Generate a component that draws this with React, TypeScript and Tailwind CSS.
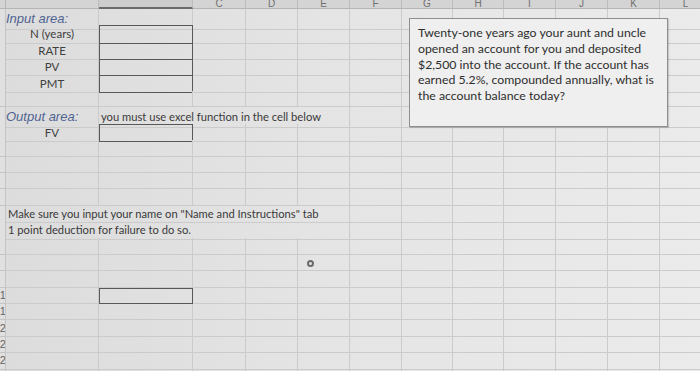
import React from 'react';

// Column template: row header, A, B, C ... L
const COLS = 'grid grid-cols-[6px_93px_94px_53px_52px_52px_52px_51px_51px_52px_52px_52px_52px]';
const LETTERS = ['A', 'B', 'C', 'D', 'E', 'F', 'G', 'H', 'I', 'J', 'K', 'L'];

type Cell = {
  span?: string;
  box?: 'top' | 'mid' | 'single';
  content?: React.ReactNode;
  className?: string;
};

const blue = "italic text-[#4f6391] text-[13px] font-['Liberation_Sans',Arial,sans-serif]";
const center = 'justify-center text-[11.5px] text-[#404040]';
const note = 'text-[11.2px] text-[#3a3a3a] pl-[2px] whitespace-nowrap';

// Only the cells that hold something; the rest are filled in as empty grid cells
const ROWS: Record<number, Cell[]> = {
  1: [{ content: 'Input area:', className: blue }],
  2: [{ content: 'N (years)', className: center }, { box: 'top' }],
  3: [{ content: 'RATE', className: center }, { box: 'mid' }],
  4: [{ content: 'PV', className: center }, { box: 'mid' }],
  5: [{ content: 'PMT', className: center }, { box: 'mid' }],
  7: [
    { content: 'Output area:', className: blue },
    { span: 'col-span-4', content: 'you must use excel function in the cell below', className: note },
  ],
  8: [{ content: 'FV', className: center }, { box: 'single' }],
  13: [{ span: 'col-span-5', content: 'Make sure you input your name on "Name and Instructions" tab', className: note }],
  14: [{ span: 'col-span-5', content: '1 point deduction for failure to do so.', className: note }],
  16: [
    {},
    {},
    {},
    {},
    { content: <span className="block w-[7px] h-[7px] rounded-full border-2 border-[#6b6b6b] ml-[9px] mt-[1px]" /> },
  ],
  18: [{}, { box: 'single' }],
};

const spanCount = (c: Cell) => (c.span ? Number(c.span.split('-')[2]) : 1);

function Row({ n }: { n: number }) {
  const defined = ROWS[n] ?? [];
  const used = defined.reduce((s, c) => s + spanCount(c), 0);
  const cells: Cell[] = [...defined, ...Array.from({ length: 12 - used }, () => ({}))];

  return (
    <div className={`${COLS} h-[16.4px]`}>
      {/* row header, almost entirely outside the photo */}
      <div className="bg-[#e0e0e0] border-r border-b border-[#c4c4c4] overflow-hidden flex items-center justify-end">
        {n >= 18 && (
          <span className="text-[11px] leading-none text-[#666] translate-x-[7px] font-['Liberation_Sans',sans-serif]">
            {n}
          </span>
        )}
      </div>
      {cells.map((c, i) => {
        const boxCls =
          c.box === 'top' || c.box === 'single'
            ? 'border-r border-b border-r-[#585858] border-b-[#585858] shadow-[inset_1px_1px_0_#585858]'
            : c.box === 'mid'
            ? 'border-r border-b border-r-[#585858] border-b-[#585858] shadow-[inset_1px_0_0_#585858]'
            : 'border-r border-b border-[#cbcbcb]';
        return (
          <div
            key={i}
            className={`${c.span ?? ''} ${boxCls} flex items-center min-w-0 font-['Lato','Open_Sans',sans-serif] ${c.className ?? ''}`}
          >
            {c.content}
          </div>
        );
      })}
    </div>
  );
}

export default function App() {
  return (
    <div className="relative w-[700px] h-[371px] overflow-hidden bg-linear-to-r from-[#dcdcdc] via-[#e5e5e5] to-[#ebebeb]">
      {/* column headers */}
      <div className={`${COLS} h-[9px] bg-[#d4d4d4]`}>
        <div className="border-r border-b border-[#b5b5b5]" />
        {LETTERS.map((l) => (
          <div
            key={l}
            className={`flex items-end justify-center overflow-hidden border-r border-[#bcbcbc] ${
              l === 'B' ? 'border-b-2 border-b-[#6a6a6a] bg-[#cdcdcd]' : 'border-b border-b-[#b5b5b5]'
            }`}
          >
            {l !== 'A' && l !== 'B' && (
              <span className="text-[10px] leading-[9px] text-[#707070] font-['Liberation_Sans',sans-serif]">{l}</span>
            )}
          </div>
        ))}
      </div>

      {Array.from({ length: 23 }, (_, i) => (
        <Row key={i} n={i + 1} />
      ))}

      {/* floating text box with the question */}
      <div className="absolute left-[409px] top-[18px] w-[259px] h-[109px] bg-[#efefef] border border-[#8e8e8e] shadow-[1px_1px_1px_rgba(0,0,0,0.15)] pl-[8px] pr-[6px] pt-[6px] text-[12.3px] leading-[15.8px] text-[#2e2e2e] font-['Lato','Open_Sans',sans-serif]">
        Twenty-one years ago your aunt and uncle opened an account for you and deposited $2,500 into the
        account. If the account has earned 5.2%, compounded annually, what is the account balance today?
      </div>
    </div>
  );
}
